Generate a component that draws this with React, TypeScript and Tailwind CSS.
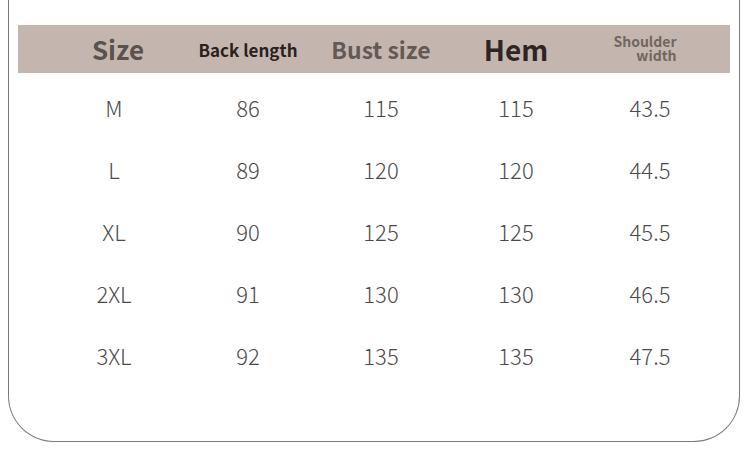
import React from 'react';

const ROWS = [
  ['M', '86', '115', '115', '43.5'],
  ['L', '89', '120', '120', '44.5'],
  ['XL', '90', '125', '125', '45.5'],
  ['2XL', '91', '130', '130', '46.5'],
  ['3XL', '92', '135', '135', '47.5'],
];

const FONT = "font-['Noto_Sans_CJK_SC','Noto_Sans',sans-serif]";

export default function App() {
  return (
    <div className={`w-[750px] h-[475px] bg-white overflow-hidden ${FONT}`}>
      <div className="ml-2 w-[732px] h-[442px] border-x border-b border-[#7a7a7a] rounded-b-[46px] pt-[25px] px-[9px]">
        {/* header band */}
        <div className="h-[48px] bg-[#c4b6ae] pl-[35px] grid grid-cols-[130px_130px_136px_134px_134px] items-center font-bold">
          <div className="text-center text-[26px] leading-none text-[#5b514d]">Size</div>
          <div className="text-center text-[17px] leading-none text-[#2a211f]">Back length</div>
          <div className="text-center text-[23px] leading-none text-[#645955]">Bust size</div>
          <div className="text-center text-[28px] leading-none text-[#2e2522]">Hem</div>
          <div className="flex justify-center pr-[10px]">
            <div className="flex flex-col items-end text-[14px] leading-[14px] text-[#71665f] -mt-[2px]">
              <span>Shoulder</span>
              <span>width</span>
            </div>
          </div>
        </div>

        {/* data rows */}
        <div className="pl-[35px] pt-[3px]">
          {ROWS.map((row) => (
            <div
              key={row[0]}
              className="h-[62px] grid grid-cols-[130px_130px_136px_134px_134px] items-center font-light text-[22px] text-[#4a4a4a]"
            >
              {row.map((cell, i) => (
                <div key={i} className={i === 0 ? 'text-center pr-2' : 'text-center'}>
                  {cell}
                </div>
              ))}
            </div>
          ))}
        </div>
      </div>
    </div>
  );
}
